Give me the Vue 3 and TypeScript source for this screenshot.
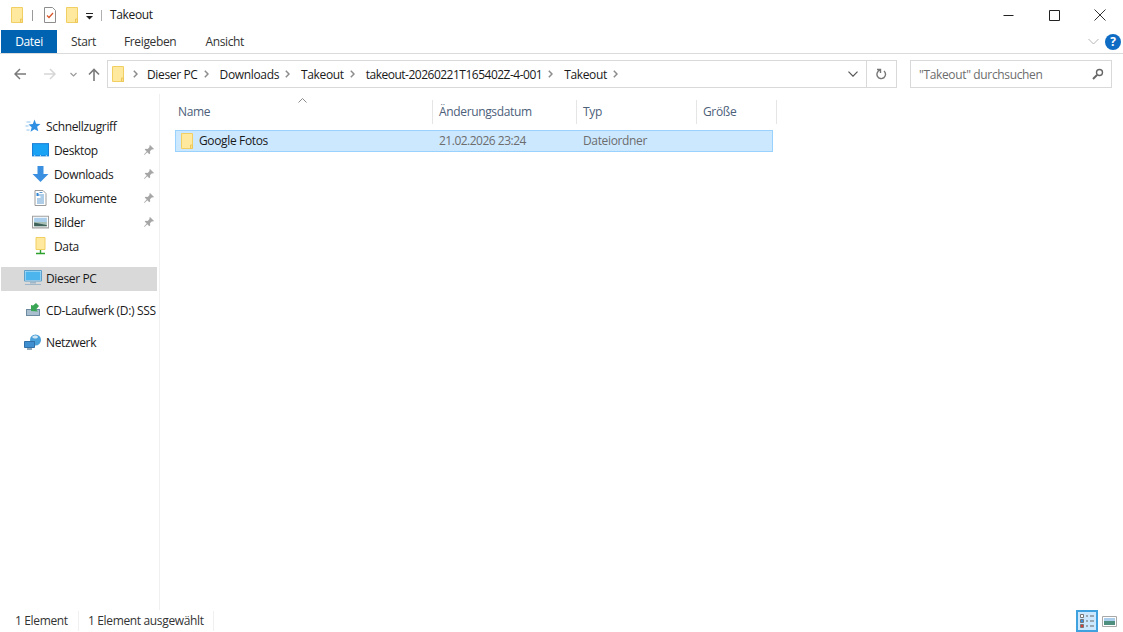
<script setup lang="ts">
type Crumb = { label: string; tight?: boolean }
const crumbs: Crumb[] = [
  { label: 'Dieser PC' },
  { label: 'Downloads' },
  { label: 'Takeout' },
  { label: 'takeout-20260221T165402Z-4-001', tight: true },
  { label: 'Takeout' },
]
const columns = ['Name', 'Änderungsdatum', 'Typ', 'Größe']
const quick = [
  { label: 'Desktop', icon: 'i-desktop' },
  { label: 'Downloads', icon: 'i-down' },
  { label: 'Dokumente', icon: 'i-doc' },
  { label: 'Bilder', icon: 'i-pic' },
]
</script>

<template>
  <div class="win">
    <svg width="0" height="0" class="defs">
      <symbol id="i-folder" viewBox="0 0 14 18">
        <path d="M1.500 1.500h11v15h-11z" fill="#ffe99f" stroke="#f2cf62" />
        <path d="M10.500 13v3.500h2V13z" fill="#fde28a" stroke="#eec75a" />
      </symbol>
      <symbol id="i-chev" viewBox="0 0 5 8">
        <path d="M.8 .8L4 4 .8 7.200" fill="none" stroke="#8c8c8c" stroke-width="1.500" />
      </symbol>
      <symbol id="i-pin" viewBox="0 0 12 12">
        <path d="M7 1l4 4-1 .6-1-.3-2 2 .2 2-.9.9-2-2L1.400 11 1 10.600l2.700-3-2-2 .9-.9 2 .2 2-2-.3-1z" fill="#a6a6a6" />
      </symbol>
      <symbol id="i-desktop" viewBox="0 0 16 14">
        <path d="M0 .5h16v12.500H0z" fill="#1a7fd6" />
        <path d="M1 1.500h14V12H1z" fill="#1aa3f5" />
        <path d="M2 12h1v1H2zM7.500 12h1v1h-1zM13 12h1v1h-1z" fill="#d6eefc" />
      </symbol>
      <symbol id="i-down" viewBox="0 0 16 16">
        <path d="M5 0h6v8h5l-8 8-8-8h5z" fill="#3b8fe0" />
      </symbol>
      <symbol id="i-doc" viewBox="0 0 12 16">
        <path d="M.5.5h8l3 3v12H.5z" fill="#fff" stroke="#9a9a9a" />
        <path d="M5 2.500h3M2.500 5h7M6 7h3.500M2.500 9h7M2.500 11h7M2.500 13h7" stroke="#5f9bd0" />
        <path d="M2 3h2v3H2z" fill="#2f84d3" />
      </symbol>
      <symbol id="i-pic" viewBox="0 0 16 12">
        <path d="M.5.5h15v11H.5z" fill="#fff" stroke="#a0a0a0" />
        <path d="M2 2h12v4H2z" fill="#a9cdea" />
        <path d="M2 6h12v4H2z" fill="#a7bfb4" />
        <path d="M2 6.500l8 1.500 4 1v1H2z" fill="#3f635a" />
      </symbol>
      <symbol id="i-pc" viewBox="0 0 18 16">
        <path d="M.5.500h17V11H.500z" fill="#cfeaf9" stroke="#5d9fc9" />
        <path d="M1.500 1.500h15V10h-15z" fill="#4db5ee" />
        <path d="M6 12h6v1.500H6zM1 14h16v1H1z" fill="#9fb6c8" />
      </symbol>
    </svg>

    <header class="title-bar">
      <svg class="qa-icon"><use href="#i-folder" /></svg>
      <span class="qa-sep" />
      <svg class="qa-check" viewBox="0 0 14 16" width="14" height="16">
        <path d="M1.500.500h8l3 3v12h-11z" fill="#fff" stroke="#8d8d8d" />
        <path d="M4 8.500l2 2 4-4.500" fill="none" stroke="#d8562b" stroke-width="1.300" />
      </svg>
      <svg class="qa-icon qa-second"><use href="#i-folder" /></svg>
      <svg class="qa-drop" viewBox="0 0 7 7" width="7" height="7">
        <path d="M0 .5h7" stroke="#222" />
        <path d="M0 3h7L3.500 6.500z" fill="#222" />
      </svg>
      <span class="qa-sep qa-sep-2" />
      <span class="title">Takeout</span>
      <div class="win-controls">
        <span class="win-btn">
          <svg width="11" height="11" viewBox="0 0 11 11"><path d="M.5 5.500h10" stroke="#222" /></svg>
        </span>
        <span class="win-btn">
          <svg width="11" height="11" viewBox="0 0 11 11"><path d="M.5.500h10v10H.500z" fill="none" stroke="#222" /></svg>
        </span>
        <span class="win-btn">
          <svg width="12" height="12" viewBox="0 0 12 12"><path d="M.5.500l11 11M11.500.500l-11 11" stroke="#333" /></svg>
        </span>
      </div>
    </header>

    <nav class="tabs">
      <span class="tab tab-file">Datei</span>
      <span class="tab tab-start">Start</span>
      <span class="tab tab-share">Freigeben</span>
      <span class="tab tab-view">Ansicht</span>
      <svg class="ribbon-chev" width="11" height="7" viewBox="0 0 11 7"><path d="M.5 1l5 5 5-5" fill="none" stroke="#b5b5b5" /></svg>
      <span class="help">?</span>
    </nav>

    <section class="address-row">
      <svg class="nav-arrow nav-back" width="12" height="12" viewBox="0 0 12 12"><path d="M12 6H1.500M6 1L1 6l5 5" fill="none" stroke="#7a7a7a" stroke-width="1.500" /></svg>
      <svg class="nav-arrow nav-fwd" width="12" height="12" viewBox="0 0 12 12"><path d="M0 6h10.500M6 1l5 5-5 5" fill="none" stroke="#d6d6d6" stroke-width="1.500" /></svg>
      <svg class="nav-hist" width="7" height="5" viewBox="0 0 7 5"><path d="M.5 1l3 3 3-3" fill="none" stroke="#9a9a9a" stroke-width="1.200" /></svg>
      <svg class="nav-arrow nav-up" width="12" height="13" viewBox="0 0 12 13"><path d="M6 13V2M1 6.500l5-5 5 5" fill="none" stroke="#7a7a7a" stroke-width="1.600" /></svg>
      <div class="address">
        <svg class="addr-folder"><use href="#i-folder" /></svg>
        <template v-for="(c, i) in crumbs" :key="i">
          <svg class="crumb-sep" :class="{ 'crumb-sep-first': i === 0 }"><use href="#i-chev" /></svg>
          <span class="crumb" :class="{ tight: c.tight }">{{ c.label }}</span>
        </template>
        <svg class="crumb-sep"><use href="#i-chev" /></svg>
        <svg class="addr-drop" width="10" height="6" viewBox="0 0 10 6"><path d="M.5 .7l4.500 4.500L9.500 .7" fill="none" stroke="#555" stroke-width="1.200" /></svg>
        <span class="addr-refresh">
          <svg width="11" height="13" viewBox="0 0 11 13"><path d="M1 1.500h3.500V5M4 2.200A4.300 4.300 0 1 0 8 3" fill="none" stroke="#777" stroke-width="1.400" /></svg>
        </span>
      </div>
      <div class="search">
        <span class="search-text">"Takeout" durchsuchen</span>
        <svg width="12" height="12" viewBox="0 0 12 12"><circle cx="7.500" cy="4.500" r="3" fill="none" stroke="#666" stroke-width="1.400" /><path d="M5 7l-4 4" stroke="#666" stroke-width="2" /></svg>
      </div>
    </section>

    <main class="body">
      <aside class="side">
        <div class="side-row head first">
          <svg class="side-ico star" viewBox="0 0 15 14" width="15" height="14"><path d="M9 .500l1.600 4.300 4.400.2-3.400 2.800 1.200 4.400L9 10.200 5 12.700 6.200 8.300 3 5.500l4.300-.4z" fill="#2f8fe3" /><path d="M1 3h4M0 7h3M1 11h3" stroke="#8fc3ee" /></svg>
          <span>Schnellzugriff</span>
        </div>
        <div v-for="q in quick" :key="q.label" class="side-row sub">
          <svg class="side-ico" :class="q.icon"><use :href="'#' + q.icon" /></svg>
          <span class="grow">{{ q.label }}</span>
          <svg class="pin"><use href="#i-pin" /></svg>
        </div>
        <div class="side-row sub">
          <svg class="side-ico data-ico" viewBox="0 0 14 18" width="14" height="18">
            <path d="M2.500.500h9v12h-9z" fill="#ffe99f" stroke="#f2cf62" />
            <path d="M7 13v3M2.500 16.500h9" stroke="#2ea02e" stroke-width="1.400" />
          </svg>
          <span>Data</span>
        </div>
        <div class="side-row head active gap">
          <svg class="side-ico" width="18" height="16"><use href="#i-pc" /></svg>
          <span>Dieser PC</span>
        </div>
        <div class="side-row head gap">
          <svg class="side-ico" viewBox="0 0 16 16" width="16" height="16">
            <path d="M1 7h14v7H1z" fill="#6d8aa0" />
            <path d="M2 8h12v5H2z" fill="#a9bfd0" />
            <path d="M11 1L8 3.500 6 3v6l7 .5L11 7.500 14 4z" fill="#3aa655" />
          </svg>
          <span class="clip">CD-Laufwerk (D:) SSS</span>
        </div>
        <div class="side-row head gap">
          <svg class="side-ico" viewBox="0 0 18 16" width="18" height="16">
            <circle cx="11.500" cy="6" r="5.500" fill="#4aa0d8" />
            <path d="M8 3c2-2 5-2 6 0-1 2-4 2-6 0z" fill="#cfe6f5" />
            <path d="M.5 7.500h10v6h-10z" fill="#3f8fd0" stroke="#2f6ea6" />
            <path d="M3 15h5" stroke="#6f8ba0" stroke-width="1.500" />
          </svg>
          <span>Netzwerk</span>
        </div>
      </aside>

      <div class="files">
        <svg class="sort-caret" width="9" height="5" viewBox="0 0 9 5"><path d="M.5 4.500l4-4 4 4" fill="none" stroke="#8a8a8a" /></svg>
        <div class="col-head">
          <span v-for="c in columns" :key="c" class="col">{{ c }}</span>
        </div>
        <div class="file-row">
          <span class="file-name">
            <svg class="file-ico"><use href="#i-folder" /></svg>
            Google Fotos
          </span>
          <span class="file-meta tight">21.02.2026 23:24</span>
          <span class="file-meta">Dateiordner</span>
        </div>
      </div>
    </main>

    <footer class="status">
      <span class="status-item first-item">1 Element</span>
      <span class="status-item second-item">1 Element ausgewählt</span>
      <span class="view-btn active-view">
        <svg width="18" height="18" viewBox="0 0 18 18">
          <path d="M2.500 2.500h3v3h-3z" fill="#fff" stroke="#777" />
          <path d="M2.500 7.500h3v3h-3z" fill="#3b8fe0" stroke="#777" />
          <path d="M2.500 12.500h3v3h-3z" fill="#d8403a" stroke="#777" />
          <path d="M8 4h2M12 4h4M8 9h2M12 9h4M8 14h2M12 14h4" stroke="#666" />
        </svg>
      </span>
      <span class="view-btn">
        <svg width="15" height="11" viewBox="0 0 15 11">
          <path d="M.5.500h14v10H.500z" fill="#fff" stroke="#a8a8a8" />
          <path d="M2 2h11v3H2z" fill="#a9cdea" />
          <path d="M2 5h11v4H2z" fill="#4f8f7f" />
        </svg>
      </span>
    </footer>
  </div>
</template>

<style>
html, body { margin: 0; background: #fff; }
</style>

<style scoped>
.win {
  width: 1123px;
  height: 632px;
  display: flex;
  flex-direction: column;
  font-family: "Open Sans", "Noto Sans", "Liberation Sans", sans-serif;
  font-size: 12px;
  letter-spacing: -0.35px;
  color: #1a1a1a;
  overflow: hidden;
  background: #fff;
  position: relative;
}
.defs { position: absolute; }
.tight { letter-spacing: -0.5px; }
.title-bar {
  height: 30px;
  flex: none;
  display: flex;
  align-items: center;
  padding-left: 10px;
}
.qa-icon { width: 14px; height: 18px; flex: none; }
.qa-sep { width: 1px; height: 11px; background: #9a9a9a; margin-left: 8px; flex: none; }
.qa-check { margin-left: 10px; flex: none; }
.qa-second { margin-left: 8px; }
.qa-drop { margin-left: 7px; margin-top: 2px; flex: none; }
.qa-sep-2 { margin-left: 8px; background: #b0b0b0; }
.title { margin-left: 8px; padding-bottom: 1px; }
.win-controls { margin-left: auto; display: flex; }
.win-btn {
  width: 46px;
  height: 30px;
  display: flex;
  align-items: center;
  justify-content: center;
}
.tabs {
  height: 24px;
  box-sizing: border-box;
  flex: none;
  display: flex;
  align-items: center;
  padding-left: 1px;
  border-bottom: 1px solid #dadbdc;
  color: #333;
}
.tab { line-height: 23px; text-align: center; }
.tab-file {
  width: 56px;
  background: #0063b1;
  color: #fff;
}
.tab-start { margin-left: 14px; }
.tab-share { margin-left: 28px; }
.tab-view { margin-left: 29px; }
.ribbon-chev { margin-left: auto; }
.help {
  width: 16px;
  height: 16px;
  margin: 0 2px 0 6px;
  border-radius: 50%;
  background: #0f6cc4;
  color: #fff;
  font-weight: 700;
  font-size: 12px;
  line-height: 16px;
  text-align: center;
}
.address-row {
  height: 40px;
  flex: none;
  display: flex;
  align-items: center;
  padding-left: 14px;
}
.nav-arrow { flex: none; }
.nav-fwd { margin-left: 18px; }
.nav-hist { margin-left: 14px; flex: none; }
.nav-up { margin-left: 11px; }
.address {
  margin-left: 7px;
  width: 790px;
  height: 28px;
  box-sizing: border-box;
  border: 1px solid #d9d9d9;
  display: flex;
  align-items: center;
  padding-left: 3px;
  color: #1a1a1a;
}
.addr-folder { width: 14px; height: 18px; flex: none; }
.crumb-sep {
  width: 5px;
  height: 8px;
  flex: none;
  margin: 0 11px 0 6px;
}
.crumb-sep-first { margin: 0 9px 0 8px; }
.crumb { white-space: nowrap; }
.addr-drop { margin-left: auto; flex: none; margin-right: 8px; }
.addr-refresh {
  width: 29px;
  height: 100%;
  border-left: 1px solid #d9d9d9;
  display: flex;
  align-items: center;
  justify-content: center;
  flex: none;
}
.search {
  margin-left: 13px;
  width: 202px;
  height: 28px;
  box-sizing: border-box;
  border: 1px solid #d9d9d9;
  display: flex;
  align-items: center;
  justify-content: space-between;
  padding: 0 7px 0 8px;
  color: #6d6d6d;
}
.body { flex: 1; display: flex; min-height: 0; }
.side {
  width: 160px;
  flex: none;
  box-sizing: border-box;
  border-right: 1px solid #f0f0f0;
  padding: 21px 0 0 1px;
}
.side-row {
  height: 24px;
  padding-bottom: 2px;
  box-sizing: border-box;
  display: flex;
  align-items: center;
  white-space: nowrap;
  width: 156px;
}
.head { padding-left: 23px; }
.head .side-ico { margin-right: 4px; width: 18px; flex: none; }
.sub { padding-left: 31px; }
.sub .side-ico { width: 17px; height: 16px; margin-right: 5px; flex: none; }
.sub .data-ico { width: 17px; height: 18px; }
.grow { flex: 1; }
.pin { width: 12px; height: 12px; margin-right: 2px; flex: none; }
.active { background: #d9d9d9; }
.gap { margin-top: 8px; }
.clip { overflow: hidden; }
.files { flex: 1; position: relative; padding-left: 12px; }
.sort-caret { position: absolute; left: 138px; top: 4px; }
.col-head {
  height: 30px;
  padding-top: 6px;
  box-sizing: border-box;
  display: grid;
  grid-template-columns: 261px 144px 120px 80px;
  color: #4c607a;
}
.col {
  border-right: 1px solid #e5e5e5;
  padding-left: 6px;
  line-height: 24px;
}
.file-row {
  margin: 6px 0 0 3px;
  width: 598px;
  height: 22px;
  box-sizing: border-box;
  border: 1px solid #99d1ff;
  background: #cce8ff;
  display: grid;
  grid-template-columns: 257px 144px 1fr;
  align-items: center;
}
.file-name { display: flex; align-items: center; padding-left: 4px; color: #1a1a1a; line-height: 18px; }
.file-ico { width: 14px; height: 18px; margin-right: 5px; flex: none; }
.file-meta { padding-left: 6px; color: #6d6d6d; padding-bottom: 1px; }
.status {
  height: 22px;
  flex: none;
  display: flex;
  align-items: center;
  color: #333;
}
.status-item { border-right: 1px solid #f0f0f0; line-height: 20px; }
.first-item { padding-left: 15px; width: 63px; }
.second-item { padding-left: 9px; width: 125px; margin-right: auto; }
.view-btn {
  width: 22px;
  height: 22px;
  box-sizing: border-box;
  display: flex;
  align-items: center;
  justify-content: center;
  flex: none;
}
.active-view { background: #cce8ff; border: 2px solid #3fa1dd; }
.view-btn:last-child { margin-right: 3px; }
</style>
